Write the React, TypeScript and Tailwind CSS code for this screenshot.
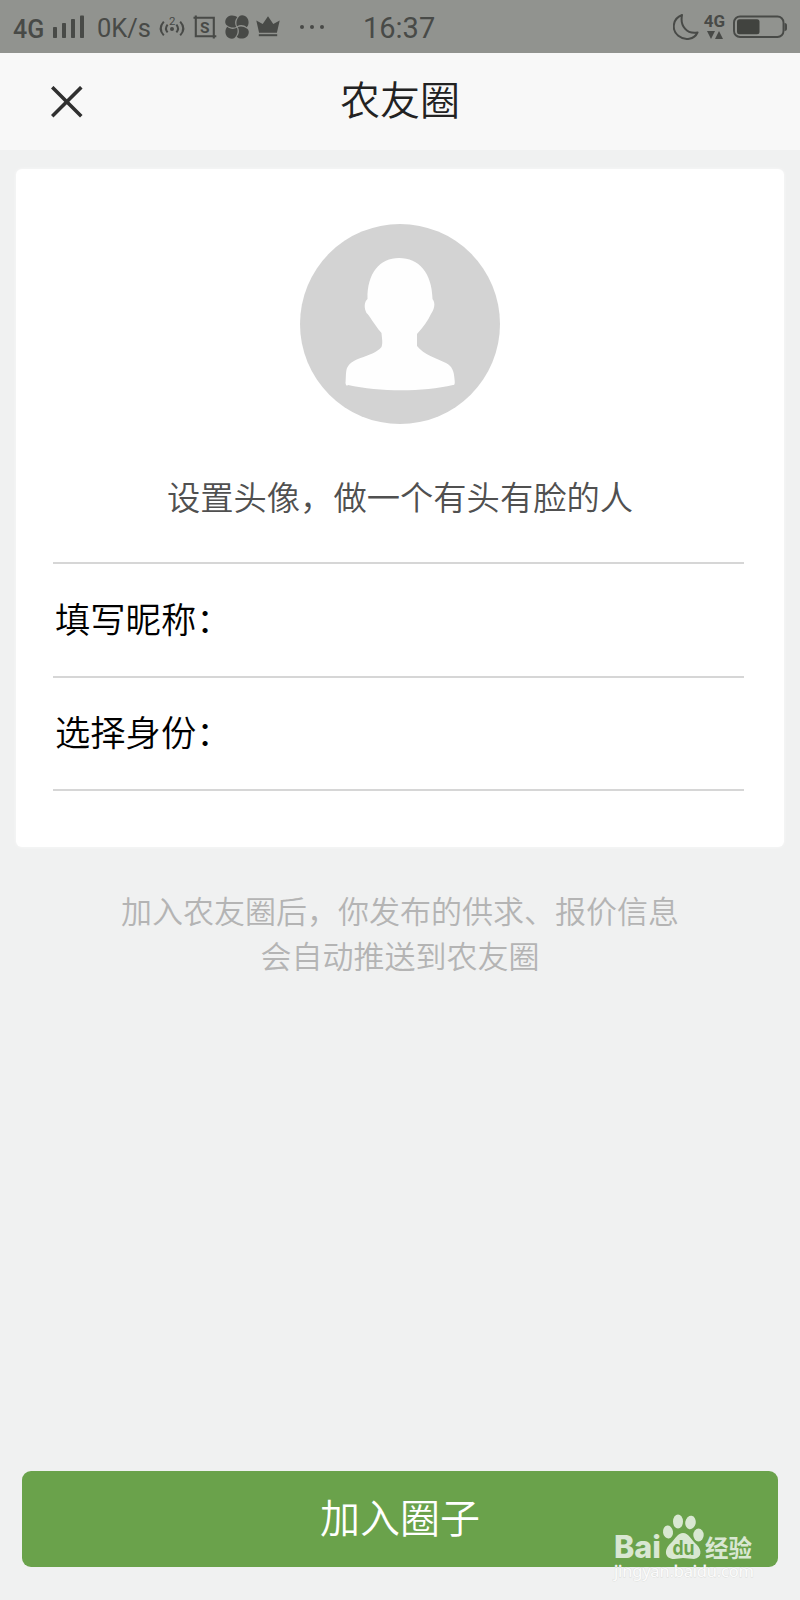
import React from "react";

interface FieldRowProps {
  label: string;
}

const SignalIcon: React.FC = () => (
  <svg className="ml-[9px] h-6 w-[31px] shrink-0" viewBox="0 0 31 24" fill="#484a47">
    <rect x="0" y="12" width="4" height="11" rx="0.8" />
    <rect x="9" y="8" width="4" height="15" rx="0.8" />
    <rect x="18" y="4" width="4" height="19" rx="0.8" />
    <rect x="27" y="0.5" width="4" height="22.5" rx="0.8" />
  </svg>
);

const HotspotIcon: React.FC = () => (
  <svg className="ml-[9px] h-6 w-6 shrink-0 overflow-visible" viewBox="0 0 24 24" fill="none" stroke="#484a47" strokeWidth="2">
    <circle cx="12" cy="14" r="2" fill="#484a47" stroke="none" />
    <path d="M7.6 9.6c-2 2.4-2 5.4 0 7.8M3.8 6.600C-0.2 11-0.2 16 3.8 20.4M16.4 9.6c2 2.4 2 5.4 0 7.8M20.2 6.6c4 4.4 4 9.4 0 13.8" />
    <text x="12.3" y="9.5" textAnchor="middle" fontSize="11.5" fontFamily="Roboto, sans-serif" fill="#484a47" stroke="none">
      2
    </text>
  </svg>
);

const ScreenshotIcon: React.FC = () => (
  <svg className="ml-[9px] h-6 w-6 shrink-0" viewBox="0 0 24 24" fill="none" stroke="#484a47" strokeWidth="2.1">
    <path d="M0.5 2.7H20.8V23.5M2.8 0.5V21.3H23.3" />
    <text x="11.8" y="17.6" textAnchor="middle" fontSize="15.5" fontWeight="700" fontFamily="Roboto, sans-serif" fill="#484a47" stroke="none">
      S
    </text>
  </svg>
);

// one petal, turned three times around the centre
const PinwheelIcon: React.FC = () => (
  <svg className="ml-[8px] h-6 w-6 shrink-0" viewBox="0 0 24 24" fill="#484a47">
    <path id="petal" d="M12.3 2.3C9.5-0.8 0.6-0.6 0.2 7C0.2 8.6 1 9.8 2.2 10.5C4.8 12.7 8.4 13.1 11.2 12C9.3 8.4 10 4.8 12.3 2.3Z" />
    <use href="#petal" transform="rotate(90 12 12)" />
    <use href="#petal" transform="rotate(180 12 12)" />
    <use href="#petal" transform="rotate(270 12 12)" />
  </svg>
);

const CrownIcon: React.FC = () => (
  <svg className="ml-[7px] h-6 w-6 shrink-0" viewBox="0 0 24 24" fill="#484a47">
    <path d="M0.3 5.4L6.7 9L12 1.2L17.3 9L23.7 5.4L20.9 17.8H3.1Z" />
    <rect x="2.8" y="19.2" width="18.4" height="2" />
  </svg>
);

const MoonIcon: React.FC = () => (
  <svg className="h-[26px] w-[26px] shrink-0" viewBox="0 0 26 26" fill="none" stroke="#484a47" strokeWidth="2" strokeLinejoin="round">
    <path d="M9 1C-0.5 4.5-1.8 16 5.3 21.8C12 27.2 21.5 25.2 24.5 18.5C14 20.5 6.8 12 9 1Z" />
  </svg>
);

const BatteryIcon: React.FC = () => (
  <svg className="ml-[8px] h-6 w-[54px] shrink-0" viewBox="0 0 54 24" fill="none">
    <rect x="1" y="1.5" width="49.5" height="20.5" rx="6" stroke="#484a47" strokeWidth="1.9" />
    <rect x="4" y="4.2" width="22.5" height="15" rx="2.5" fill="#41433f" />
    <path d="M51.5 8V16C53.5 16 54 15 54 13.5V10.5C54 9 53.5 8 51.5 8Z" fill="#484a47" />
  </svg>
);

const StatusBar: React.FC = () => (
  <div className="flex h-[53px] items-center bg-[#91938f] pr-[13px] pl-[13px] font-[Roboto,sans-serif] text-[#484a47]">
    <span className="mt-1.5 w-[31px] text-[25px] leading-none font-medium">4G</span>
    <SignalIcon />
    <span className="ml-[13px] mt-1 w-[54px] text-[25.5px] leading-none">0K/s</span>
    <HotspotIcon />
    <ScreenshotIcon />
    <PinwheelIcon />
    <CrownIcon />
    <div className="ml-5 flex gap-[6px]">
      <span className="h-1 w-1 rounded-full bg-[#484a47]" />
      <span className="h-1 w-1 rounded-full bg-[#484a47]" />
      <span className="h-1 w-1 rounded-full bg-[#484a47]" />
    </div>
    <span className="ml-[39px] mt-1 text-[29px] leading-none">16:37</span>
    <div className="ml-auto flex items-center">
      <MoonIcon />
      <div className="ml-[5px] flex w-[21px] flex-col items-center">
        <span className="text-[17px] leading-[14px] font-bold">4G</span>
        <svg className="mt-[3px] h-2 w-4" viewBox="0 0 16 8" fill="#484a47">
          <path d="M0 0H8L4 8ZM8 8H16L12 0Z" />
        </svg>
      </div>
      <BatteryIcon />
    </div>
  </div>
);

const Header: React.FC = () => (
  <header className="grid h-[97px] grid-cols-[1fr_auto_1fr] items-center bg-[#f8f8f8] text-[#222]">
    <button className="ml-[51px] w-8">
      <svg className="h-8 w-8" viewBox="0 0 32 32" stroke="#303030" strokeWidth="3.6">
        <path d="M1.2 1.2L30.3 30.3M30.3 1.2L1.2 30.3" />
      </svg>
    </button>
    <h1 className="pb-[7px] text-[40px] leading-none font-[350]">农友圈</h1>
  </header>
);

const Avatar: React.FC = () => (
  <svg className="ml-[3px] h-[200px] w-[200px]" viewBox="0 0 200 200">
    <circle cx="100" cy="100" r="100" fill="#d3d3d3" />
    <path
      fill="#fefefe"
      d="M99 34C80 34 67 49 67.5 75C64 78 64 84 66.5 89C70 92 73 99 81.5 109C82 115 83 119 81.5 123C72 134 53 132 47 144C45.5 148 46 156 45.500 159C46 162 47 162 48 161C80 168 123 168 153 161C155 161 155 159 154.5 155C154 147 152 142 146 139C136 134 124 131 117 122V110C123 103 128 97 131 90C134 86 136 79 132.5 75C132 49 119 34 99 34Z"
    />
  </svg>
);

const FieldRow: React.FC<FieldRowProps> = ({ label }) => (
  <div className="flex h-[113.5px] items-center border-b-2 border-[#d6d6d6] pb-[5px] pl-0.5 text-[35.3px] text-black">
    <span className="leading-none font-[350]">{label}：</span>
  </div>
);

// paw logo with its lettering and the address underneath
const Watermark: React.FC = () => (
  <div className="pointer-events-none absolute top-[43px] left-[592px] w-[143px] text-white/75">
    <svg className="block h-[46px] w-[140px] overflow-visible" viewBox="0 0 140 46" fill="currentColor">
      <text x="0" y="44" fontSize="31" fontWeight="800" fontFamily="Inter, sans-serif" textLength="47" lengthAdjust="spacingAndGlyphs">
        Bai
      </text>
      <ellipse cx="54" cy="18" rx="5" ry="6.5" transform="rotate(-8 54 18)" />
      <ellipse cx="64" cy="7.5" rx="5" ry="7" />
      <ellipse cx="76.5" cy="8.5" rx="5.2" ry="6.8" transform="rotate(10 76.5 8.5)" />
      <ellipse cx="84.5" cy="21" rx="5.2" ry="6.5" />
      <path d="M69 19C64 19 61 25 57 29C49 36 51 45 60 45C64 45 66 44 69 44C73 44 76 45 80 45C88 44 88 36 83 31C77 26 75 19 69 19Z" />
      <text x="58.5" y="40.5" fontSize="20" fontWeight="700" fontFamily="Inter, sans-serif" fill="#6aa24b" textLength="22" lengthAdjust="spacingAndGlyphs">
        du
      </text>
      <text x="91" y="42.5" fontSize="24" fontWeight="700" fontFamily="'Noto Sans CJK SC', sans-serif" textLength="47" lengthAdjust="spacingAndGlyphs">
        经验
      </text>
    </svg>
    <svg className="mt-1 block h-5 w-[143px] overflow-visible" viewBox="0 0 143 20">
      <text x="0" y="13" fontSize="16.5" fontFamily="'Noto Sans', sans-serif" fill="#fbfbfb" stroke="#dcdedb" strokeWidth="0.8" paintOrder="stroke" textLength="140">
        jingyan.baidu.com
      </text>
    </svg>
  </div>
);

const App: React.FC = () => {
  return (
    <div className="flex h-[1600px] w-[800px] flex-col overflow-hidden bg-[#f0f1f1] font-['Noto_Sans_CJK_SC',sans-serif]">
      <StatusBar />
      <Header />
      <main className="flex flex-1 flex-col px-4 pt-[19px]">
        <section className="flex h-[678px] flex-col items-center rounded-md bg-white pt-[55px] pr-10 pl-[37px] shadow-[0_0_3px_#fafafa]">
          <Avatar />
          <p className="mt-[55px] ml-[3px] text-[33.3px] leading-[34px] font-[350] text-[#505050]">
            设置头像，做一个有头有脸的人
          </p>
          <div className="mt-[49px] w-full border-t-2 border-[#d6d6d6]">
            <FieldRow label="填写昵称" />
            <FieldRow label="选择身份" />
          </div>
        </section>
        <p className="mt-[40px] text-center text-[31px] leading-[45px] font-[350] text-[#b4b4b4]">
          加入农友圈后，你发布的供求、报价信息
          <br />
          会自动推送到农友圈
        </p>
      </main>
      <footer className="px-[22px] pb-[33px]">
        <div className="relative">
          <button className="block h-24 w-full rounded-[9px] bg-[#6aa24b] pb-1.5 text-[40px] leading-none font-[350] text-white">
            加入圈子
          </button>
          <Watermark />
        </div>
      </footer>
    </div>
  );
};

export default App;
